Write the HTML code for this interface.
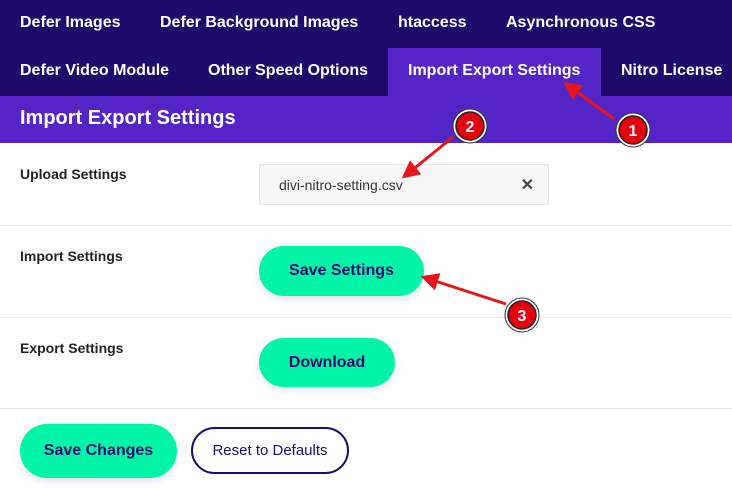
<!DOCTYPE html>
<html><head><style>
*{margin:0;padding:0;box-sizing:border-box}
body{width:732px;height:488px;overflow:hidden;background:#fff;font-family:"Liberation Sans",sans-serif;position:relative}
.nav{position:absolute;left:0;top:0;width:732px;height:96px;background:#1f0a6b}
.t{position:absolute;color:#fff;font-weight:bold;font-size:16px;white-space:nowrap}
.act{position:absolute;left:388px;top:48px;width:213px;height:48px;background:#5425c6}
.hdr{position:absolute;left:0;top:96px;width:732px;height:47px;background:#5425c6}
.lab{position:absolute;left:20px;color:#222;font-weight:bold;font-size:14px}
.sep{position:absolute;left:0;width:732px;height:1px;background:#e6e6e6}
.btn{position:absolute;background:#00f5a9;border-radius:26px;color:#1f0a6b;font-weight:bold;font-size:16px;display:flex;align-items:center;justify-content:center;box-shadow:0 3px 8px rgba(80,60,160,.15)}
</style></head><body>
<div class="nav"></div>
<div class="act"></div>
<div class="t" style="left:20px;top:14px">Defer Images</div>
<div class="t" style="left:160px;top:14px">Defer Background Images</div>
<div class="t" style="left:398px;top:14px">htaccess</div>
<div class="t" style="left:506px;top:14px">Asynchronous CSS</div>
<div class="t" style="left:20px;top:62px">Defer Video Module</div>
<div class="t" style="left:208px;top:62px">Other Speed Options</div>
<div class="t" style="left:408px;top:62px">Import Export Settings</div>
<div class="t" style="left:621px;top:62px">Nitro License</div>
<div class="hdr"></div>
<div class="t" style="left:20px;top:107px;font-size:20px">Import Export Settings</div>
<div class="lab" style="top:166px">Upload Settings</div>
<div style="position:absolute;left:259px;top:164px;width:290px;height:41px;background:#f7f7f7;border:1px solid #e6e6e6;font-size:14px;color:#333;padding:12px 0 0 19px">divi-nitro-setting.csv<span style="position:absolute;right:14px;top:10px;font-size:16px;font-weight:bold;color:#444">✕</span></div>
<div class="sep" style="top:225px"></div>
<div class="lab" style="top:248px">Import Settings</div>
<div class="btn" style="left:259px;top:246px;width:165px;height:50px">Save Settings</div>
<div class="sep" style="top:317px"></div>
<div class="lab" style="top:340px">Export Settings</div>
<div class="btn" style="left:259px;top:338px;width:136px;height:49px">Download</div>
<div class="sep" style="top:408px"></div>
<div class="btn" style="left:20px;top:424px;width:157px;height:54px;border-radius:27px">Save Changes</div>
<div style="position:absolute;left:191px;top:427px;width:158px;height:47px;border:2px solid #1f0a6b;border-radius:24px;color:#1f0a6b;font-size:15px;display:flex;align-items:center;justify-content:center">Reset to Defaults</div>
<svg width="732" height="488" style="position:absolute;left:0;top:0">
<defs><marker id="a" markerWidth="6" markerHeight="6" refX="2" refY="3" orient="auto"><path d="M0,0 L6,3 L0,6 z" fill="#e8141b"/></marker></defs>
<g stroke="#e8141b" stroke-width="3" fill="none" marker-end="url(#a)">
<line x1="614" y1="119" x2="573" y2="89"/>
<line x1="453" y1="137" x2="411" y2="171"/>
<line x1="506" y1="304" x2="432" y2="280"/>
</g>
<g font-family="Liberation Sans" font-weight="bold" font-size="16" fill="#fff" text-anchor="middle">
<circle cx="633" cy="130" r="17" fill="#fff" stroke="#333" stroke-width="1"/><circle cx="633" cy="130" r="14" fill="#e5000f" stroke="#222" stroke-width="1.5"/><text x="633" y="136">1</text>
<circle cx="470" cy="126" r="17" fill="#fff" stroke="#333" stroke-width="1"/><circle cx="470" cy="126" r="14" fill="#e5000f" stroke="#222" stroke-width="1.5"/><text x="470" y="132">2</text>
<circle cx="522" cy="315" r="17" fill="#fff" stroke="#333" stroke-width="1"/><circle cx="522" cy="315" r="14" fill="#e5000f" stroke="#222" stroke-width="1.5"/><text x="522" y="321">3</text>
</g>
</svg>
</body></html>
